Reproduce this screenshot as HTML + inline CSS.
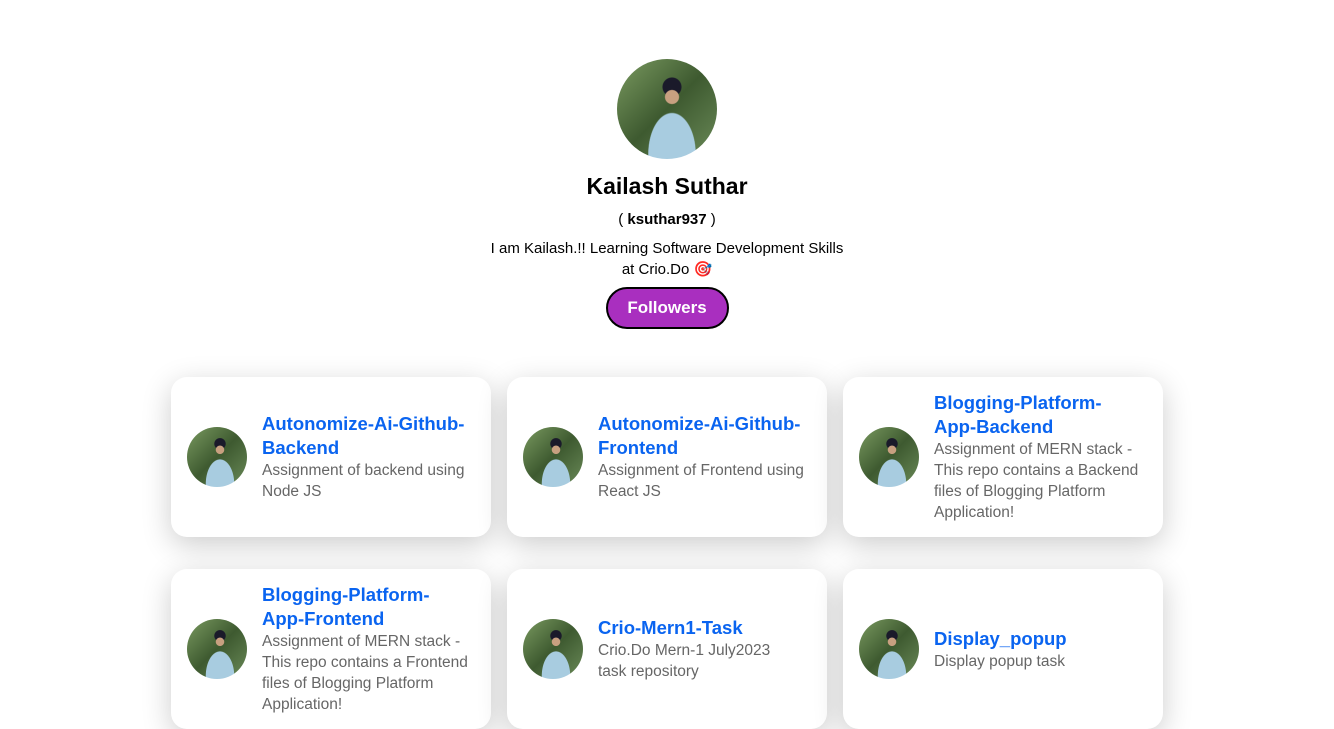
<!DOCTYPE html>
<html><head><style>
html,body{margin:0;padding:0;background:#fff;width:1334px;height:641px;overflow:hidden;font-family:"Liberation Sans",sans-serif}
.top{text-align:center}
.av{border-radius:50%;background:radial-gradient(circle at 55% 38%,#c8a080 0 8%,transparent 9%),radial-gradient(circle at 55% 28%,#1a1a2a 0 10%,transparent 11%),radial-gradient(ellipse at 55% 95%,#a8cce0 0 30%,transparent 31%),linear-gradient(135deg,#7a9a60,#3e5a30 50%,#6a8a58);display:inline-block}
.big{width:100px;height:100px;margin-top:59px}
h1{font-size:23px;font-weight:700;margin:7px 0 0;line-height:30px;color:#000}
.user{font-size:15px;margin-top:9px;line-height:20px}
.bio{font-size:15px;width:380px;margin:8px auto 0;line-height:21px}
.btn{display:inline-block;margin-top:7px;background:#a92fbf;color:#fff;border:2px solid #000;border-radius:22px;width:119px;height:38px;line-height:38px;font-size:17px;font-weight:700}
.grid{position:absolute;left:171px;top:377px;display:grid;grid-template-columns:320px 320px 320px;column-gap:16px;row-gap:32px}
.card{height:160px;border-radius:16px;background:#fff;box-shadow:0 8px 30px rgba(0,0,0,.2);display:flex;align-items:center;padding:0 16px;box-sizing:border-box;overflow:hidden}
.card .av{width:60px;height:60px;flex:none;margin-right:15px}
.card>div:last-child{width:215px}
.t{color:#0a64f0;font-size:18.5px;font-weight:700;line-height:24px}
.d{color:#666;font-size:15.5px;line-height:21px}
</style></head><body>
<div class="top">
<div class="av big"></div>
<h1>Kailash Suthar</h1>
<div class="user">( <b>ksuthar937</b> )</div>
<div class="bio">I am Kailash.!! Learning Software Development Skills<br>at Crio.Do 🎯</div>
<div class="btn">Followers</div>
</div>
<div class="grid">
<div class="card"><div class="av"></div><div><div class="t">Autonomize-Ai-Github-<br>Backend</div><div class="d">Assignment of backend using<br>Node JS</div></div></div>
<div class="card"><div class="av"></div><div><div class="t">Autonomize-Ai-Github-<br>Frontend</div><div class="d">Assignment of Frontend using<br>React JS</div></div></div>
<div class="card"><div class="av"></div><div><div class="t">Blogging-Platform-<br>App-Backend</div><div class="d">Assignment of MERN stack -<br>This repo contains a Backend<br>files of Blogging Platform<br>Application!</div></div></div>
<div class="card"><div class="av"></div><div><div class="t">Blogging-Platform-<br>App-Frontend</div><div class="d">Assignment of MERN stack -<br>This repo contains a Frontend<br>files of Blogging Platform<br>Application!</div></div></div>
<div class="card"><div class="av"></div><div><div class="t">Crio-Mern1-Task</div><div class="d">Crio.Do Mern-1 July2023<br>task repository</div></div></div>
<div class="card"><div class="av"></div><div><div class="t">Display_popup</div><div class="d">Display popup task</div></div></div>
</div>
</body></html>
